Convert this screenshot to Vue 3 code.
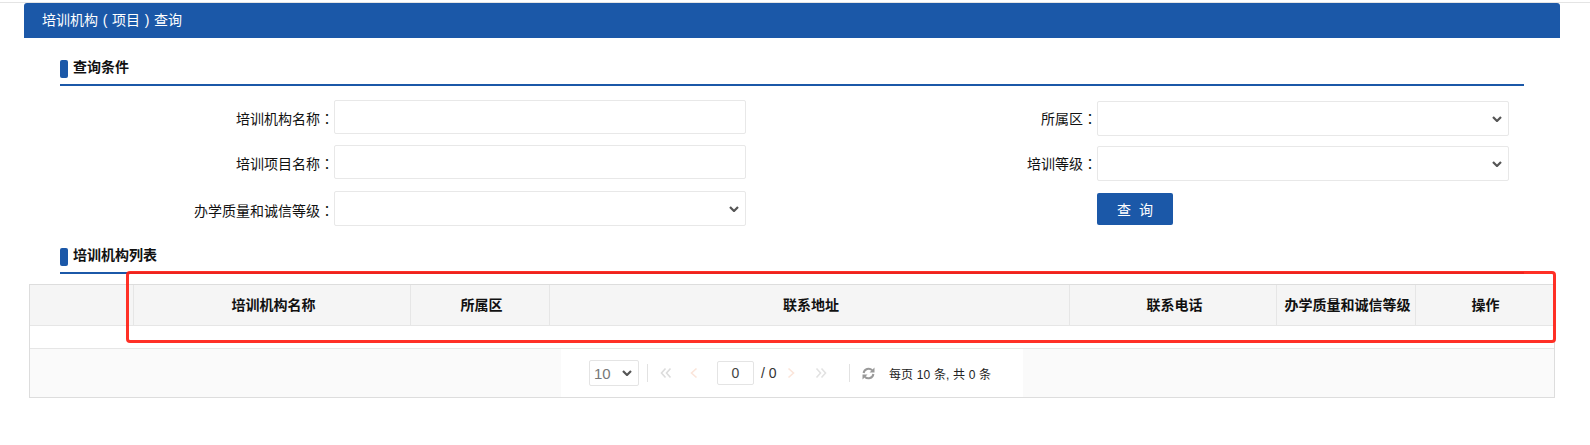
<script setup>
const columns = [
  { label: '', width: 104 },
  { label: '培训机构名称', width: 277 },
  { label: '所属区', width: 139 },
  { label: '联系地址', width: 520 },
  { label: '联系电话', width: 207 },
  { label: '办学质量和诚信等级', width: 139 },
  { label: '操作', width: 139 },
]
</script>

<template>
  <div class="page">
    <header class="title-bar">培训机构<span class="paren">(</span>项目<span class="paren">)</span>查询</header>

    <section class="section query">
      <h2 class="section-title"><i class="mark"></i>查询条件</h2>
      <div class="form">
        <div class="form-col left">
          <div class="row r1"><label>培训机构名称<span class="colon">：</span></label><input class="control" type="text" /></div>
          <div class="row r2"><label>培训项目名称<span class="colon">：</span></label><input class="control" type="text" /></div>
          <div class="row r3"><label>办学质量和诚信等级<span class="colon">：</span></label>
            <div class="select-wrap">
              <select class="control tall"></select>
              <svg class="chev" width="10" height="6" viewBox="0 0 10 6"><path d="M1 1l4 4 4-4" /></svg>
            </div>
          </div>
        </div>
        <div class="form-col right">
          <div class="row r1"><label>所属区<span class="colon">：</span></label>
            <div class="select-wrap">
              <select class="control tall"></select>
              <svg class="chev" width="10" height="6" viewBox="0 0 10 6"><path d="M1 1l4 4 4-4" /></svg>
            </div>
          </div>
          <div class="row r2"><label>培训等级<span class="colon">：</span></label>
            <div class="select-wrap">
              <select class="control tall"></select>
              <svg class="chev" width="10" height="6" viewBox="0 0 10 6"><path d="M1 1l4 4 4-4" /></svg>
            </div>
          </div>
          <div class="row r3"><label></label><button class="search" type="button">查 询</button></div>
        </div>
      </div>
    </section>

    <section class="section list">
      <h2 class="section-title"><i class="mark"></i>培训机构列表</h2>
    </section>

    <div class="grid-wrap">
      <div class="grid-head">
        <div v-for="(c, i) in columns" :key="i" class="th" :style="{ width: c.width + 'px' }">{{ c.label }}</div>
      </div>
      <div class="grid-body"></div>
      <div class="pager-bar">
        <div class="pager">
          <div class="select-wrap size-wrap">
            <select class="page-size"><option>10</option></select>
            <svg class="chev" width="10" height="6" viewBox="0 0 10 6"><path d="M1 1l4 4 4-4" /></svg>
          </div>
          <span class="sep"></span>
          <svg class="ic first" width="12" height="12" viewBox="0 0 12 12"><path d="M5.5 1.5 1.5 6l4 4.5M10.5 1.5 6.5 6l4 4.5" /></svg>
          <svg class="ic prev" width="8" height="12" viewBox="0 0 8 12"><path d="M6.5 1.5 1.5 6l5 4.5" /></svg>
          <input class="page-no" value="0" />
          <span class="total">/ 0</span>
          <svg class="ic next" width="8" height="12" viewBox="0 0 8 12"><path d="M1.5 1.5 6.5 6l-5 4.5" /></svg>
          <svg class="ic last" width="12" height="12" viewBox="0 0 12 12"><path d="M1.5 1.5 5.5 6l-4 4.5M6.5 1.5l4 4.5-4 4.5" /></svg>
          <span class="sep sep2"></span>
          <svg class="refresh" width="13" height="13" viewBox="0 0 13 13"><path d="M1.6 6a5 5 0 0 1 8.6-2.7" /><path d="M11.4 7a5 5 0 0 1-8.6 2.7" /><path class="fill" d="M12.5 .5v5h-5zM.5 12.5v-5h5z" /></svg>
          <span class="info">每页 10 条, 共 0 条</span>
        </div>
      </div>
    </div>

    <div class="annotation"></div>
  </div>
</template>

<style>
html, body { margin: 0; background: #fff; overflow: hidden; }
</style>

<style scoped>
.page {
  position: relative;
  width: 1590px;
  height: 445px;
  overflow: hidden;
  padding-top: 3px;
  box-sizing: border-box;
  font-family: "Liberation Sans", "Noto Sans CJK SC", sans-serif;
  font-size: 14px;
  color: #111;
}
.page::before {
  content: "";
  position: absolute;
  left: 0; right: 0; top: 2px;
  height: 1px;
  background: #e4e4e4;
}
.title-bar {
  position: relative;
  margin: 0 30px 0 24px;
  height: 35px;
  line-height: 35px;
  padding-left: 18px;
  background: #1b58a8;
  color: #fff;
  font-size: 14px;
  border-radius: 3px 3px 0 0;
}
.paren { display: inline-block; width: 14px; text-align: center; }
.colon { font-family: "Noto Sans CJK TC", sans-serif; }
.section { margin: 0 66px 0 60px; }
.query { margin-top: 22px; }
.section-title {
  display: flex;
  align-items: flex-start;
  gap: 5px;
  height: 24px;
  margin: 0;
  box-sizing: content-box;
  font-size: 14px;
  font-weight: 700;
  line-height: 14px;
  color: #111;
  border-bottom: 2px solid #1b58a8;
}
.mark {
  width: 8px;
  height: 18px;
  background: #1b58a8;
  border-radius: 2px;
  flex: none;
}
.form {
  display: flex;
  margin-top: 14px;
}
.form-col { display: flex; flex-direction: column; }
.form-col.left { width: 686px; }
.form-col.right { width: 763px; padding-top: 1px; }
.row { display: flex; align-items: center; }
.row label { text-align: right; white-space: nowrap; font-size: 14px; box-sizing: border-box; }
.left label { width: 274px; padding-top: 2px; }
.right label { width: 351px; padding-bottom: 2px; }
.left .r2 { margin-top: 11px; }
.left .r3 { margin-top: 12px; }
.right .r2 { margin-top: 10px; }
.right .r3 { margin-top: 12px; }
.control {
  display: block;
  box-sizing: border-box;
  width: 412px;
  height: 34px;
  border: 1px solid #e8e8e8;
  border-radius: 2px;
  background: #fff;
  padding: 0 6px;
  outline: none;
  appearance: none;
}
.control.tall { height: 35px; }
.select-wrap { position: relative; }
.chev {
  position: absolute;
  right: 7px;
  top: 50%;
  margin-top: -3px;
  fill: none;
  stroke: #555;
  stroke-width: 2.2;
  pointer-events: none;
}
.search {
  width: 76px;
  height: 32px;
  border: 0;
  border-radius: 2px;
  background: #1b58a8;
  color: #fff;
  font: inherit;
  font-size: 14px;
  letter-spacing: 1px;
  word-spacing: 2px;
  padding: 0 0 0 1px;
}
.list { margin-top: 22px; }
.grid-wrap {
  margin: 10px 35px 0 29px;
  width: 1526px;
  box-sizing: border-box;
  border: 1px solid #dddddd;
}
.grid-head {
  display: flex;
  height: 41px;
  background: #f5f5f5;
  border-bottom: 1px solid #e6e6e6;
  box-sizing: border-box;
}
.th {
  flex: none;
  box-sizing: border-box;
  text-align: center;
  line-height: 40px;
  font-weight: 700;
  font-size: 14px;
  color: #111;
  border-right: 1px solid #e6e6e6;
  white-space: nowrap;
  padding-left: 3px;
}
.th:last-child { border-right: 0; padding-left: 0; }
.grid-body { height: 23px; box-sizing: border-box; border-bottom: 1px solid #e6e6e6; background: #fff; }
.pager-bar {
  height: 48px;
  background: #fafafa;
  display: flex;
  justify-content: center;
}
.pager {
  display: flex;
  align-items: center;
  width: 462px;
  box-sizing: border-box;
  background: #fff;
  padding-left: 28px;
  font-size: 14px;
}
.size-wrap { width: 50px; height: 26px; flex: none; }
.page-size {
  display: block;
  box-sizing: border-box;
  width: 50px;
  height: 26px;
  border: 1px solid #e4e4e4;
  border-radius: 2px;
  background: #fff;
  color: #777;
  font: inherit;
  font-size: 15px;
  outline: none;
  appearance: none;
  padding: 0 0 0 4px;
}
.sep { width: 1px; height: 18px; background: #e2e2e2; margin-left: 8px; flex: none; }
.sep2 { margin-left: 22px; }
.ic { fill: none; stroke-width: 1.6; flex: none; }
.first { stroke: #dcdcdc; margin-left: 12px; }
.prev { stroke: #fbe5da; margin-left: 18px; }
.next { stroke: #fbe5da; margin-left: 10px; }
.last { stroke: #e2e2e2; margin-left: 20px; }
.page-no {
  box-sizing: border-box;
  width: 37px;
  height: 24px;
  margin-left: 19px;
  border: 1px solid #e4e4e4;
  border-radius: 2px;
  text-align: center;
  color: #444;
  font: inherit;
  outline: none;
  padding: 0;
}
.total { margin-left: 7px; color: #333; white-space: nowrap; }
.refresh { margin-left: 12.5px; fill: none; stroke: #999; stroke-width: 2; flex: none; }
.refresh .fill { fill: #999; stroke: none; }
.info { margin-left: 14px; color: #222; white-space: nowrap; font-size: 12px; word-spacing: 0.4px; }
.annotation {
  position: absolute;
  left: 126px;
  top: 271px;
  width: 1430px;
  height: 72px;
  box-sizing: border-box;
  border: 3px solid rgba(255, 30, 20, 0.92);
  border-radius: 4px;
}
</style>
